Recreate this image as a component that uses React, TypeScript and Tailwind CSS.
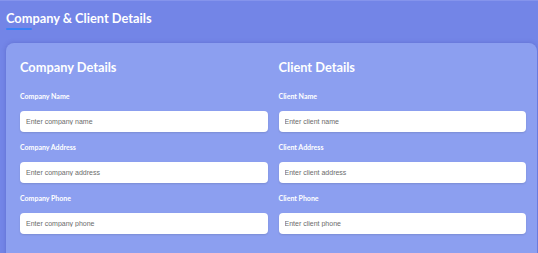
import React from "react";

const Field = ({ label, placeholder }: { label: string; placeholder: string }) => (
  <div className="flex flex-col">
    <label className="text-[7px] font-bold text-white leading-[9px] h-[9px] mb-[10px]" style={{ fontFamily: 'Lato, sans-serif' }}>
      {label}
    </label>
    <input
      placeholder={placeholder}
      className="h-[21px] w-full rounded-[4px] bg-white px-[6px] text-[7px] text-gray-700 placeholder:text-[#6b6b6b] shadow-[0_1px_2px_rgba(0,0,0,0.12)] outline-none"
      style={{ fontFamily: '"Liberation Sans", Arial, sans-serif' }}
    />
  </div>
);

export default function App() {
  return (
    <div className="w-[538px] h-[253px] overflow-hidden bg-[#7385e7] border-t border-[#8594ec]" style={{ fontFamily: 'Lato, sans-serif' }}>
      <div className="pl-[6px] pt-[9px]">
        <h1 className="text-[12.8px] font-bold text-white leading-[17px]">Company &amp; Client Details</h1>
        <div className="mt-[1px] h-[2px] w-[26px] rounded bg-[#3b82f6]" />
      </div>
      <div className="ml-[6px] mt-[13px] mr-[1px] rounded-[8px] bg-[#8c9ff0] shadow-[0_0_4px_rgba(60,70,160,0.35)] pl-[14px] pr-[11px] pt-[16px] pb-[40px] grid grid-cols-2 gap-x-[11px]">
        <div className="flex flex-col">
          <h2 className="text-[12.8px] font-bold text-white leading-[16px] mb-[17px]">Company Details</h2>
          <div className="flex flex-col gap-[11px]">
            <Field label="Company Name" placeholder="Enter company name" />
            <Field label="Company Address" placeholder="Enter company address" />
            <Field label="Company Phone" placeholder="Enter company phone" />
          </div>
        </div>
        <div className="flex flex-col">
          <h2 className="text-[12.8px] font-bold text-white leading-[16px] mb-[17px]">Client Details</h2>
          <div className="flex flex-col gap-[11px]">
            <Field label="Client Name" placeholder="Enter client name" />
            <Field label="Client Address" placeholder="Enter client address" />
            <Field label="Client Phone" placeholder="Enter client phone" />
          </div>
        </div>
      </div>
    </div>
  );
}
